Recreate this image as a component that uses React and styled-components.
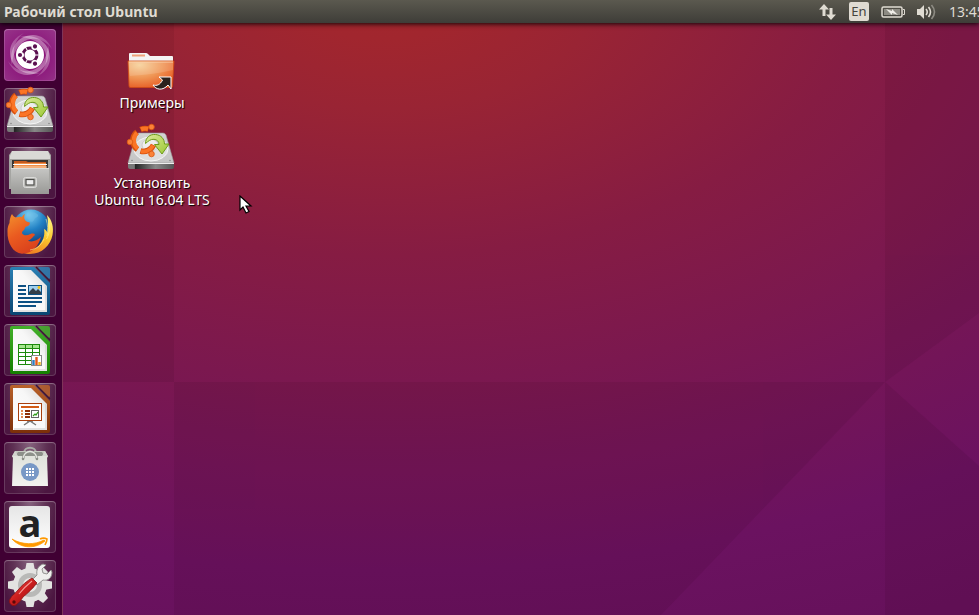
import React from 'react';
import styled, { createGlobalStyle } from 'styled-components'


const GlobalStyle = createGlobalStyle`
    * {
        box-sizing: border-box;
    }
    body {
        margin: 0;
        font-family: "Noto Sans", "Open Sans", sans-serif;
    }
`
const Screen = styled.div`
    height: 100vh;
    display: grid;
    grid-template-rows: 23px minmax(0, 1fr);
    overflow: hidden;
    background-color: #6b1250;
`
const TopPanel = styled.header`
    display: flex;
    align-items: center;
    justify-content: space-between;
    padding-left: 4px;
    background: linear-gradient(#5b594f, #3e3d38);
    color: #dfdbd2;
    z-index: 1;
    box-shadow: 0 1px 5px rgba(0, 0, 0, 0.9);
`
const Title = styled.h1`
    margin: 0;
    font-size: 14px;
    line-height: 20px;
    font-weight: 700;
    white-space: nowrap;
`
const Indicators = styled.div`
    display: flex;
    align-items: center;
    gap: 12px;
`
const Indicator = styled.button`
    display: flex;
    padding: 0;
    border: none;
    background: none;
    color: inherit;
    cursor: pointer;
`
const Layout = styled(Indicator)`
    width: 20px;
    height: 19px;
    align-items: center;
    justify-content: center;
    border-radius: 2px;
    background-color: #dfdbd2;
    color: #45443e;
    font-family: inherit;
    font-size: 13px;
    line-height: 19px;
`
const Clock = styled(Indicator)`
    width: 30px;
    overflow: hidden;
    white-space: nowrap;
    font-family: inherit;
    font-size: 14px;
    line-height: 20px;
`
const Main = styled.div`
    display: flex;
    min-height: 0;
`
const Launcher = styled.nav`
    flex: none;
    display: flex;
    flex-direction: column;
    gap: 7px;
    padding: 6px 6px 0 4px;
    border-right: 1px solid #7d3558;
    background-color: #400033;
    overflow: hidden;
`
const Tile = styled.button`
    flex: none;
    width: 52px;
    height: 52px;
    padding: 0;
    border: none;
    border-radius: 4px;
    background: ${props => props.$home
        ? 'radial-gradient(circle at 50% 55%, #8a1178 30%, #97368a 100%)'
        : 'radial-gradient(ellipse at 50% 0%, #86627e 0%, #5f3154 45%, #4c1641 80%)'};
    box-shadow: inset 0 0 0 1px rgba(255, 255, 255, 0.14), inset 0 1px 1px rgba(255, 255, 255, 0.2);
    cursor: pointer;

    svg {
        display: block;
        overflow: visible;
    }
`
const Desktop = styled.main`
    position: relative;
    flex: 1;
    display: grid;
    min-width: 0;
    overflow: hidden;
`
const Wallpaper = styled.svg`
    grid-area: 1 / 1;
    width: 100%;
    height: 100%;
    min-height: 0;
`
const Files = styled.div`
    grid-area: 1 / 1;
    z-index: 1;
    justify-self: start;
    display: flex;
    flex-direction: column;
    align-items: center;
    gap: 13px;
    padding: 21px 28px;
`
const File = styled.button`
    display: flex;
    flex-direction: column;
    align-items: center;
    gap: 2px;
    width: 122px;
    padding: 0;
    border: none;
    background: none;
    color: #fff;
    font-family: inherit;
    font-size: 14px;
    line-height: 17px;
    text-shadow: 1px 1px 1px #000;
    white-space: pre-line;
    cursor: pointer;

    svg {
        overflow: visible;
    }
`
const Pointer = styled.svg`
    position: absolute;
    left: 176px;
    top: 172px;
    z-index: 2;
`

const HomeIcon = () => (
    <svg width="52" height="52" viewBox="0 0 52 52">
        <defs>
            <linearGradient id="swirl" x1="0" y1="0" x2="1" y2="1">
                <stop offset="0" stopColor="#fff" stopOpacity="0.45" />
                <stop offset="1" stopColor="#fff" stopOpacity="0.04" />
            </linearGradient>
        </defs>
        {[0, 90, 180, 270].map(angle => (
            <path key={angle} transform={`rotate(${angle} 26 26)`} fill="url(#swirl)"
                d="M8 36C4 20 14 6 29 6c8 0 15 5 19 14C42 12 34 9 27 10 17 11 9 21 8 36z" />
        ))}
        <circle cx="26" cy="26" r="14" fill="#fff" />
        <circle cx="26" cy="26" r="7" fill="none" stroke="#5b1050" strokeWidth="3" />
        {[60, 180, 300].map(angle => (
            <g key={angle} transform={`rotate(${angle} 26 26)`}>
                <circle cx="35" cy="26" r="3" fill="#fff" />
                <circle cx="36" cy="26" r="2.1" fill="#5b1050" />
            </g>
        ))}
        {[0, 120, 240].map(angle => (
            <path key={angle} transform={`rotate(${angle} 26 26)`} d="M31 26h5" stroke="#fff" strokeWidth="1" />
        ))}
    </svg>
)

const DriveIcon = ({ id, size = 52, viewBox = '0 0 52 52' }) => (
    <svg width={size} height={size} viewBox={viewBox}>
        <defs>
            <linearGradient id={`${id}-top`} x1="0" y1="0" x2="0" y2="1">
                <stop offset="0" stopColor="#d3d3d3" />
                <stop offset="1" stopColor="#c4c4c4" />
            </linearGradient>
            <linearGradient id={`${id}-front`}>
                <stop offset="0" stopColor="#777" />
                <stop offset="0.14" stopColor="#777" />
                <stop offset="0.15" stopColor="#222" />
                <stop offset="0.6" stopColor="#888" />
                <stop offset="1" stopColor="#555" />
            </linearGradient>
            <linearGradient id={`${id}-arrow`} x1="0" y1="0" x2="1" y2="1">
                <stop offset="0" stopColor="#dcea9a" />
                <stop offset="1" stopColor="#9bc832" />
            </linearGradient>
        </defs>
        <path d="M14 8h24q2 0 3 2l8 28H3l8-28q1-2 3-2z" fill={`url(#${id}-top)`} stroke="#999" strokeWidth="0.6" />
        <path d="M3 38h46v4q0 2-2 2H5q-2 0-2-2z" fill={`url(#${id}-front)`} />
        <path d="M3 38.5h46" stroke="#eee" strokeWidth="1" />
        <ellipse cx="26" cy="24" rx="17" ry="12" fill="#dedede" stroke="#f5f5f5" />
        <ellipse cx="25" cy="20" rx="8" ry="6" fill="#eee" stroke="#bbb" strokeWidth="0.6" />
        <circle cx="7" cy="35.500" r="0.8" fill="#888" />
        <circle cx="45" cy="35.500" r="0.8" fill="#888" />
        <g fill="none" stroke="#d64f0b" strokeWidth="5.600">
            <path d="M12 7a11 11 0 0 0 .5 17.500" />
            <path d="M15.500 4.500a11 11 0 0 1 8-.5" />
            <path d="M15.500 26a11 11 0 0 0 13-6" />
        </g>
        <g fill="none" stroke="#fb7526" strokeWidth="4.200">
            <path d="M12 7.700a11 11 0 0 0 .5 16" />
            <path d="M16 4.300a11 11 0 0 1 7-.4" />
            <path d="M16 26.200a11 11 0 0 0 12-5.800" />
        </g>
        <g fill="#fb8238" stroke="#d9560f" strokeWidth="0.8">
            <circle cx="26.500" cy="2" r="2.800" />
            <circle cx="5" cy="17" r="2.800" />
            <circle cx="26.500" cy="29" r="2.800" />
        </g>
        <path d="M20.500 18.500c0-6 4.500-9.500 10-9 5.500.4 9 4.500 9 9.500H44L37 29l-7.500-9.500h4.500c0-3-2-5-5-5.200-3.500-.2-5.500 1.700-8.500 4.200z"
            fill={`url(#${id}-arrow)`} stroke="#6d9c18" strokeWidth="1" strokeLinejoin="round" />
    </svg>
)

const CabinetIcon = () => (
    <svg width="52" height="52" viewBox="0 0 52 52">
        <defs>
            <linearGradient id="cabinet" x1="0" y1="0" x2="0" y2="1">
                <stop offset="0" stopColor="#c6c6c4" />
                <stop offset="1" stopColor="#999996" />
            </linearGradient>
        </defs>
        <path d="M8 4h36l3 4v34H5V8z" fill="#a5a5a2" />
        <path d="M8 4h36l2 5v3H6V9z" fill="#d9d9d6" />
        <path d="M8 13h36v10H8z" fill="#3b3632" />
        <path d="M10 14h12l2 1h18v6H10z" fill="#c65a1d" />
        <path d="M10 16h32v6H10z" fill="#f08f49" />
        <path d="M9 17.500h34" stroke="#fff" />
        <path d="M9 20h34" stroke="#fbd3b0" />
        <path d="M7 21h38v26H7z" fill="url(#cabinet)" />
        <path d="M7 21.500h38" stroke="#dededc" />
        <rect x="19.500" y="30.500" width="13" height="10" rx="2" fill="#bdbdba" stroke="#dcdcda" />
        <rect x="22" y="32.500" width="8" height="5.500" fill="#eee" stroke="#4d4d4a" strokeWidth="1.200" />
    </svg>
)

const FirefoxIcon = () => (
    <svg width="52" height="52" viewBox="0 0 52 52">
        <defs>
            <radialGradient id="globe" cx="0.45" cy="0.15" r="0.9">
                <stop offset="0" stopColor="#7ed0f2" />
                <stop offset="0.45" stopColor="#2180c4" />
                <stop offset="1" stopColor="#0b2f6b" />
            </radialGradient>
            <linearGradient id="fox" x1="0.1" y1="0" x2="0.6" y2="1">
                <stop offset="0" stopColor="#f28c2c" />
                <stop offset="0.5" stopColor="#ea5a20" />
                <stop offset="1" stopColor="#d9401c" />
            </linearGradient>
            <linearGradient id="tail" x1="0.6" y1="0" x2="0.3" y2="1">
                <stop offset="0" stopColor="#fff27c" />
                <stop offset="0.5" stopColor="#fbc72c" />
                <stop offset="1" stopColor="#ee7a22" />
            </linearGradient>
        </defs>
        <circle cx="27" cy="22" r="18.500" fill="url(#globe)" />
        <path d="M25 7c4-2 8 0 9 2s-3 2-4 5-5 2-6-1 0-5 1-6z" fill="#6dbce6" opacity="0.5" />
        <path d="M43 9c5 5 7 12 5.500 20C46.500 39 38 48 26 48c-5 0-10-2-12-5 10 3 18 1 22-5 4-5 5-10 4-15 2 1 3 2 3.500 4 .8-7 .8-12-.5-18z" fill="url(#tail)" />
        <path d="M8 8c1 2 2 3 4 3.500 2-.7 4-.8 6-.5.500-1.500 1.500-2.500 3-3-1 2-1 4-.3 5.500 1 1.800 2.500 2.500 5 3 .8 2-1.500 3.500-4.200 4.500-.8 1-.8 2.500-1.500 3-2 1.200-2.500 2.500-1.500 4 2 2 5 1.500 8 0 2-.8 4-.5 4.500 1-2 1.500-3.500 4.500-7 5.800 4 1.500 9 .2 13-4-2 8-8 17-19 17C9 47 3 37 3.500 25c0-3 .7-6 2-8C5.500 14 6.500 10 8 8z" fill="url(#fox)" />
        <path d="M42 13c2 6 2 11 1 17M45 17c1 5 .5 11-2.500 16M40 33c-3 7-8 10-14 11" fill="none" stroke="#fff7a0" strokeWidth="0.8" opacity="0.7" />
    </svg>
)

// LibreOffice sheet with the cut corner, the document drawing goes inside
const OfficeIcon = ({ id, light, dark, children }) => (
    <svg width="52" height="52" viewBox="0 0 52 52">
        <defs>
            <linearGradient id={`${id}-edge`} x1="0" y1="0" x2="0" y2="1">
                <stop offset="0" stopColor={light} />
                <stop offset="1" stopColor={dark} />
            </linearGradient>
            <linearGradient id={`${id}-page`} x1="0" y1="1" x2="1" y2="0">
                <stop offset="0" stopColor="#fff" />
                <stop offset="0.6" stopColor="#f7f7f7" />
                <stop offset="1" stopColor="#d5d5d5" />
            </linearGradient>
        </defs>
        <path d="M8 2h22l16 16v30q0 2-2 2H8q-2 0-2-2V4q0-2 2-2z" fill={`url(#${id}-edge)`} />
        <path d="M9 5h18l16 16v26H9z" fill={`url(#${id}-page)`} />
        <path d="M42 21v25H10" fill="none" stroke="#c9c9c9" strokeWidth="2" opacity="0.5" />
        <path d="M35 2h9q2 0 2 2v9q-1 2-3 0l-8-8q-2-2 0-3z" fill={light} opacity="0.85" />
        <path d="M32 2l14 14" stroke="#3c1634" strokeWidth="1.400" />
        {children}
    </svg>
)

const WriterIcon = () => (
    <OfficeIcon id="writer" light="#2a80b4" dark="#0a4672">
        <path d="M14 21h8M14 25h8M14 29h8M14 33h24M14 37h24M14 41h18" stroke="#0d5183" strokeWidth="2" />
        <rect x="24.500" y="20.500" width="13" height="9" fill="#9fd0ef" stroke="#0d5183" />
        <path d="M25 29v-2l4-4 3 3 2-2 3 3v2z" fill="#333f48" />
        <circle cx="35" cy="22.500" r="1.400" fill="#f5c211" />
    </OfficeIcon>
)

const CalcIcon = () => (
    <OfficeIcon id="calc" light="#43b02a" dark="#158000">
        <rect x="14.500" y="20.500" width="21" height="20" fill="#fff" stroke="#1d8a0c" />
        <path d="M15 21h20v3H15z" fill="#a6e68e" />
        <path d="M14 24.500h22M14 28.500h22M14 32.500h22M14 36.500h22M21.500 20v21M28.500 20v21" stroke="#1d8a0c" />
        <rect x="27.500" y="31.500" width="10" height="10" fill="#fff" stroke="#888" />
        <path d="M29.500 41v-5" stroke="#2d7fc4" strokeWidth="2.400" />
        <path d="M32.500 41v-8" stroke="#e2581b" strokeWidth="2.400" />
        <path d="M35.500 41v-3" stroke="#f0b51c" strokeWidth="2.400" />
    </OfficeIcon>
)

const ImpressIcon = () => (
    <OfficeIcon id="impress" light="#b9622a" dark="#7c2f08">
        <path d="M26 38l-6 4M26 38l6 4M23 38h6" stroke="#777" strokeWidth="1.500" />
        <rect x="14.500" y="20.500" width="23" height="17" fill="#fff" stroke="#a8400e" />
        <path d="M17 24h18" stroke="#d35c17" strokeWidth="2" />
        <path d="M17 28h2M17 31h2M17 34h2" stroke="#e58a53" strokeWidth="2" />
        <path d="M21 28h5M21 31h5M21 34h5" stroke="#8f2f08" strokeWidth="2" />
        <rect x="27.500" y="27.500" width="7" height="7" fill="#fff" stroke="#666" />
        <path d="M29 33l2-2 1 1 2-3" fill="none" stroke="#2f9c1a" strokeWidth="1.200" />
    </OfficeIcon>
)

const BagIcon = () => (
    <svg width="52" height="52" viewBox="0 0 52 52">
        <defs>
            <linearGradient id="bag" x1="0" y1="0" x2="0" y2="1">
                <stop offset="0" stopColor="#e0e2dc" />
                <stop offset="1" stopColor="#f2f2ef" />
            </linearGradient>
        </defs>
        <path d="M20 11c0-7 12-7 12 0" fill="none" stroke="#a9aba6" strokeWidth="2" />
        <path d="M11 9h30l3 6H8z" fill="#c6c8c1" />
        <path d="M14 10h24l3 5H11z" fill="#8d908a" />
        <path d="M8 14l3-5 3 5-4 4zM44 14l-3-5-3 5 4 4z" fill="#d3d5cf" />
        <path d="M9 14h34l1 30H8z" fill="url(#bag)" />
        <circle cx="26" cy="30" r="9" fill="#7898c6" />
        <g fill="#fff">
            {[0, 1, 2].map(row => [0, 1, 2].map(col => (
                <rect key={`${row}${col}`} x={22 + col * 3} y={26 + row * 3} width="2" height="2" />
            )))}
        </g>
        <path d="M19 17c1-10 13-10 14 0" fill="none" stroke="#90938c" strokeWidth="2.600" />
        <path d="M19 17c1-10 13-10 14 0" fill="none" stroke="#e6e7e3" strokeWidth="1.400" />
        <circle cx="19" cy="17" r="1.200" fill="#8a8d86" />
        <circle cx="33" cy="17" r="1.200" fill="#8a8d86" />
    </svg>
)

const AmazonIcon = () => (
    <svg width="52" height="52" viewBox="0 0 52 52">
        <defs>
            <linearGradient id="amazon" x1="0" y1="0" x2="0" y2="1">
                <stop offset="0" stopColor="#e6e6e6" />
                <stop offset="1" stopColor="#fff" />
            </linearGradient>
        </defs>
        <rect x="5" y="5" width="41" height="42" rx="3" fill="url(#amazon)" />
        <text x="26" y="36" textAnchor="middle" fontFamily="Open Sans" fontWeight="700" fontSize="38" fill="#222">a</text>
        <path d="M8 38c10 6 23 6 32 1l1 1c-9 8-24 8-33-2z" fill="#f90" stroke="#f90" strokeWidth="0.8" />
        <path d="M36 38c2-1 5-1 7 0 0 2-1 4-2 6" fill="none" stroke="#f90" strokeWidth="1.600" />
    </svg>
)

const SettingsIcon = () => (
    <svg width="52" height="52" viewBox="0 0 52 52">
        <defs>
            <linearGradient id="handle" x1="0" y1="0" x2="1" y2="1">
                <stop offset="0" stopColor="#ee6a62" />
                <stop offset="0.45" stopColor="#cf2020" />
                <stop offset="1" stopColor="#8f0c0c" />
            </linearGradient>
        </defs>
        <g fill="#e3e3e1">
            {[0, 45, 90, 135, 180, 225, 270, 315].map(angle => (
                <path key={angle} transform={`rotate(${angle} 26 25)`} d="M22.500 3h7l1.500 8H21z" />
            ))}
            <circle cx="26" cy="25" r="17" />
        </g>
        <circle cx="26" cy="25" r="12" fill="#b9b9b7" />
        <circle cx="26" cy="25" r="7" fill="#e8e8e6" />
        <circle cx="26" cy="25" r="4" fill="#5b3053" />
        <path d="M28 20l5-5c-1-5 1-9 6-11l3 1-4 4 1 4 4 1 4-4 1 2c0 6-4 9-9 8l-6 5z" fill="#efefed" stroke="#8b8b89" strokeWidth="0.9" strokeLinejoin="round" />
        <path d="M28 18l5 5c-4 5-9 10-14 14-2 3-4 6-7 8-4 2-8-2-6-6 2-4 6-6 8-9 4-5 9-9 14-12z" fill="url(#handle)" stroke="#8b1010" strokeWidth="0.8" />
        <path d="M28 21c-5 4-9 8-13 13" stroke="#f49a94" strokeWidth="1.200" fill="none" />
        <circle cx="10" cy="42" r="1.700" fill="#5a0808" />
    </svg>
)

const FolderIcon = () => (
    <svg width="48" height="48" viewBox="2 -3 48 48">
        <defs>
            <radialGradient id="folder" cx="0.25" cy="0.15" r="1">
                <stop offset="0" stopColor="#f6cf96" />
                <stop offset="0.5" stopColor="#ef9453" />
                <stop offset="1" stopColor="#e5501a" />
            </radialGradient>
        </defs>
        <path d="M3 7q0-1 1-1h16q1 0 2 1l2 2h22q1 0 1 1v6H3z" fill="#f4f4f4" />
        <path d="M6 8.500h13" stroke="#f0a27a" strokeWidth="2" />
        <path d="M2 14h46l-1.500 25q0 1.500-1.500 1.500H4.500Q3 40.500 3 39z" fill="url(#folder)" stroke="#cf4a14" strokeWidth="0.8" />
        <path d="M3 15h44" stroke="#f9c9a0" strokeWidth="1" />
        <path d="M3 15h44v8c-12 3-28 5-43 6z" fill="#fff" opacity="0.14" />
        <path d="M33 30h12v12l-3-4c-5 6-12 5-15 0 4 1 7 0 9.500-5z" fill="#2b211d" stroke="#fff" strokeWidth="1" strokeLinejoin="round" />
    </svg>
)

const apps = [
    { name: 'Поиск', icon: <HomeIcon />, home: true },
    { name: 'Установить Ubuntu 16.04 LTS', icon: <DriveIcon id="launcher" /> },
    { name: 'Файлы', icon: <CabinetIcon /> },
    { name: 'Firefox', icon: <FirefoxIcon /> },
    { name: 'LibreOffice Writer', icon: <WriterIcon /> },
    { name: 'LibreOffice Calc', icon: <CalcIcon /> },
    { name: 'LibreOffice Impress', icon: <ImpressIcon /> },
    { name: 'Ubuntu Software', icon: <BagIcon /> },
    { name: 'Amazon', icon: <AmazonIcon /> },
    { name: 'Параметры системы', icon: <SettingsIcon /> },
]

const App = () => {
  return (
    <Screen>
        <GlobalStyle />
        <TopPanel>
            <Title>Рабочий стол Ubuntu</Title>
            <Indicators>
                <Indicator aria-label="Сеть">
                    <svg width="18" height="18" viewBox="0 0 18 18" fill="currentColor">
                        <path d="M5 1l5 5.500H6.500V13h-3V6.500H0z" />
                        <path d="M12 17l-5-5.500h3.500V5h3v6.500H17z" />
                    </svg>
                </Indicator>
                <Layout>En</Layout>
                <Indicator aria-label="Батарея">
                    <svg width="24" height="12" viewBox="0 0 24 12">
                        <rect x="1" y="1" width="20" height="10" rx="1.500" fill="none" stroke="#dfdbd2" strokeWidth="1.500" />
                        <rect x="3" y="3" width="16" height="6" fill="#8d8b83" />
                        <path d="M22 3.500h1.500v5H22" fill="none" stroke="#dfdbd2" />
                        <path d="M5 3l6 2V3l6 6-6-2v2z" fill="#f0eee8" />
                    </svg>
                </Indicator>
                <Indicator aria-label="Звук">
                    <svg width="20" height="18" viewBox="0 0 20 18">
                        <path d="M0 6h3l4-4v14l-4-4H0z" fill="#dfdbd2" />
                        <path d="M9 6q2.500 3 0 6M11.500 4q4 5 0 10" fill="none" stroke="#dfdbd2" strokeWidth="1.600" />
                        <path d="M14.500 2q6 7 0 14" fill="none" stroke="#8d8b83" strokeWidth="1.600" />
                    </svg>
                </Indicator>
                <Clock>13:45</Clock>
            </Indicators>
        </TopPanel>
        <Main>
            <Launcher>
                {apps.map(app => (
                    <Tile key={app.name} aria-label={app.name} $home={app.home}>{app.icon}</Tile>
                ))}
            </Launcher>
            <Desktop>
                <Wallpaper viewBox="0 0 916 592" preserveAspectRatio="none" aria-hidden="true">
                    <defs>
                        <radialGradient id="sky" gradientUnits="userSpaceOnUse" cx="0" cy="0" r="700"
                            gradientTransform="translate(320 -40) scale(1.75 1)">
                            <stop offset="0" stopColor="#a4272d" />
                            <stop offset="0.08" stopColor="#a1262e" />
                            <stop offset="0.18" stopColor="#992434" />
                            <stop offset="0.39" stopColor="#861c43" />
                            <stop offset="0.57" stopColor="#7b184f" />
                            <stop offset="0.7" stopColor="#731558" />
                            <stop offset="0.84" stopColor="#6b1260" />
                            <stop offset="1" stopColor="#66115b" />
                        </radialGradient>
                    </defs>
                    <path d="M0 0h916v592H0z" fill="url(#sky)" />
                    <g fill="#200010" opacity="0.08">
                        <path d="M0 0h111v359H0z" />
                        <path d="M111 359h711L598 592H111z" />
                        <path d="M822 0h94v290L822 359zM822 359l94 84v149h-94z" />
                    </g>
                </Wallpaper>
                <Files>
                    <File>
                        <FolderIcon />
                        <span>Примеры</span>
                    </File>
                    <File>
                        <DriveIcon id="desktop" size={48} viewBox="3 -1 48 48" />
                        <span>{'Установить\nUbuntu 16.04 LTS'}</span>
                    </File>
                </Files>
                <Pointer width="14" height="20" viewBox="0 0 14 20" aria-hidden="true">
                    <path d="M1 1v14l3-3 3 6 3-1.500-3-5.500h5z" fill="#fff" stroke="#000" strokeWidth="1.200" />
                </Pointer>
            </Desktop>
        </Main>
    </Screen>
  )
}

export default App
